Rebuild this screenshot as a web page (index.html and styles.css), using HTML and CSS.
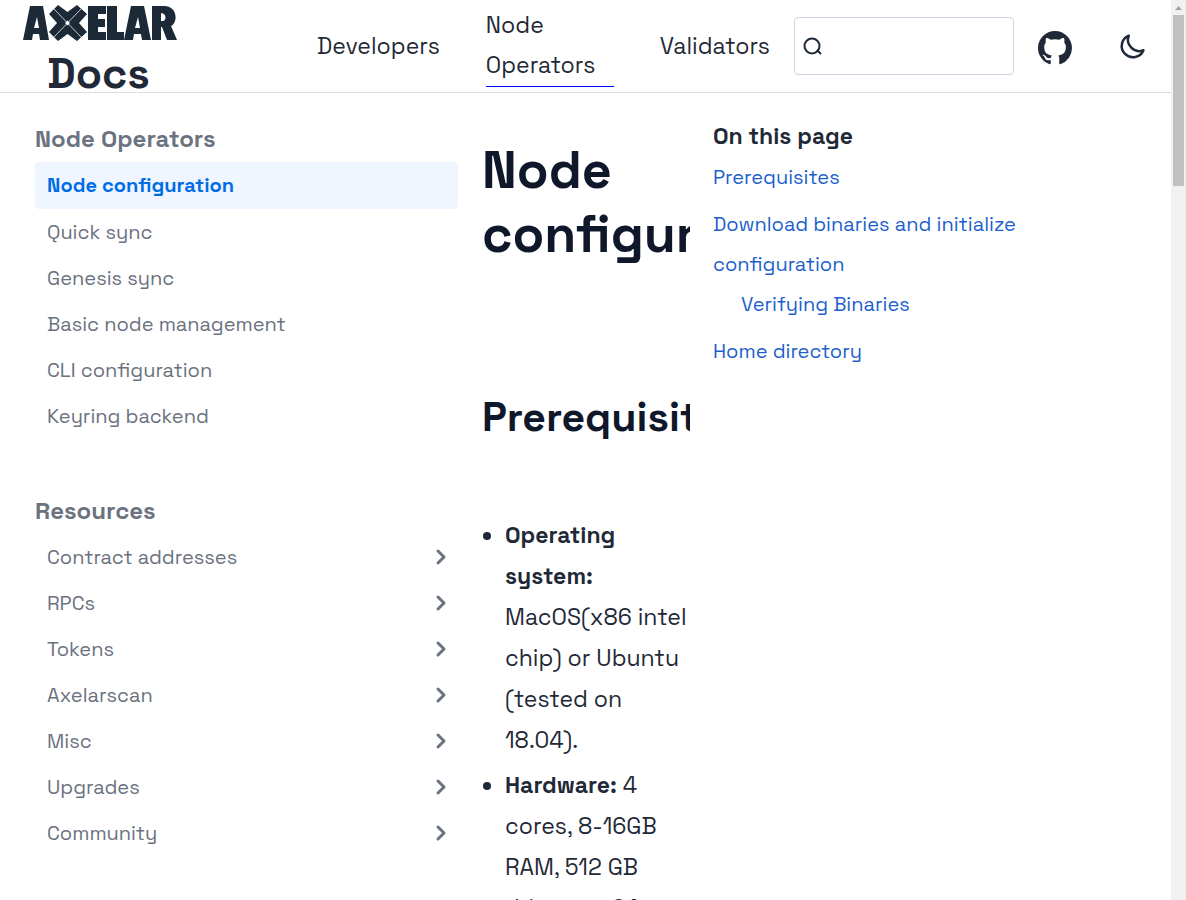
FILE: index.html
```html
<!DOCTYPE html>
<html lang="en">
<head>
<meta charset="utf-8">
<title>Node configuration | Axelar Docs</title>
<link rel="stylesheet" href="styles.css">
</head>
<body>
<div class="page">
  <header class="topbar">
    <a class="brand" href="#">
      <svg class="brand-logo" viewBox="0 0 154 36" role="img" aria-label="Axelar">
        <g fill="#1c2a38">
          <path fill-rule="evenodd" d="M0 35 7 1h13l6 34h-9l-1-6H10l-1 6zM11 23h5l-2-11z"/>
          <path d="M26 9 35 0l9.500 7L54 0l10 9-8 9 8 9-10 9-9.500-7L35 36l-9-9 8-9z"/>
          <path d="M65 1h18v8h-8v5h7v8h-7v5h8v8H65zM84 1h10v26h7v8H84z"/>
          <path fill-rule="evenodd" d="M101 35 108 1h13l7 34h-9l-1-6h-7l-1 6zM112 23h5l-2-11z"/>
          <path fill-rule="evenodd" d="M129 1h12c14 0 14 17 7 20l6 14h-10l-5-13h-1v13h-9zM138 8v8c6 1 6-8 0-8z"/>
        </g>
        <path d="M31 4 58 32M58 4 31 32" stroke="#fff" stroke-opacity=".75" fill="none"/>
        <path d="M44.500 15.500 47 18l-2.500 2.500L42 18z" fill="#fff"/>
      </svg>
      <span class="brand-name">Docs</span>
    </a>
    <nav class="main-nav" aria-label="Main">
      <a class="nav-link" href="#">Developers</a>
      <a class="nav-link nav-link-active" href="#">Node Operators</a>
      <a class="nav-link" href="#">Validators</a>
    </nav>
    <label class="search">
      <svg class="search-icon" viewBox="0 0 20 20" aria-hidden="true"><circle cx="9" cy="10" r="7.500"/><path d="M14 14l4 4"/></svg>
      <input class="search-input" type="search" aria-label="Search">
    </label>
    <a class="icon-link" href="#" aria-label="GitHub">
      <svg class="github-icon" viewBox="0 0 16 16"><path fill="currentColor" d="M8 0C3.580 0 0 3.580 0 8c0 3.540 2.290 6.530 5.470 7.590.4.070.55-.17.55-.38 0-.19-.01-.82-.01-1.490-2.010.37-2.530-.49-2.690-.94-.09-.23-.48-.94-.82-1.130-.28-.15-.68-.52-.01-.53.63-.01 1.080.58 1.230.82.72 1.210 1.870.87 2.330.66.07-.52.28-.87.51-1.070-1.780-.2-3.640-.89-3.640-3.950 0-.87.31-1.590.82-2.150-.08-.2-.36-1.020.08-2.120 0 0 .67-.21 2.200.82.64-.18 1.320-.27 2-.27s1.360.09 2 .27c1.530-1.040 2.200-.82 2.200-.82.44 1.100.16 1.920.08 2.120.51.56.82 1.270.82 2.150 0 3.070-1.870 3.750-3.650 3.950.29.25.54.73.54 1.480 0 1.070-.01 1.930-.01 2.200 0 .21.15.46.55.38A8.010 8.010 0 0 0 16 8c0-4.420-3.580-8-8-8z"/></svg>
    </a>
    <button class="theme-button" type="button" aria-label="Dark mode">
      <svg class="moon-icon" viewBox="0 0 24 24"><path fill="none" stroke="currentColor" stroke-width="2" stroke-linejoin="round" stroke-linecap="round" d="M20.354 15.354A9 9 0 0 1 8.646 3.646 9 9 0 1 0 20.354 15.354z"/></svg>
    </button>
  </header>
  <div class="columns">
    <nav class="sidebar" aria-label="Sections">
      <h2 class="side-title">Node Operators</h2>
      <ul class="side-list">
        <li><a class="side-link side-link-active" href="#">Node configuration</a></li>
        <li><a class="side-link" href="#">Quick sync</a></li>
        <li><a class="side-link" href="#">Genesis sync</a></li>
        <li><a class="side-link" href="#">Basic node management</a></li>
        <li><a class="side-link" href="#">CLI configuration</a></li>
        <li><a class="side-link" href="#">Keyring backend</a></li>
      </ul>
      <h2 class="side-title">Resources</h2>
      <ul class="side-list">
        <li><a class="side-link" href="#">Contract addresses<svg class="chevron" viewBox="0 0 12 18"><path d="M3 3l6 6-6 6"/></svg></a></li>
        <li><a class="side-link" href="#">RPCs<svg class="chevron" viewBox="0 0 12 18"><path d="M3 3l6 6-6 6"/></svg></a></li>
        <li><a class="side-link" href="#">Tokens<svg class="chevron" viewBox="0 0 12 18"><path d="M3 3l6 6-6 6"/></svg></a></li>
        <li><a class="side-link" href="#">Axelarscan<svg class="chevron" viewBox="0 0 12 18"><path d="M3 3l6 6-6 6"/></svg></a></li>
        <li><a class="side-link" href="#">Misc<svg class="chevron" viewBox="0 0 12 18"><path d="M3 3l6 6-6 6"/></svg></a></li>
        <li><a class="side-link" href="#">Upgrades<svg class="chevron" viewBox="0 0 12 18"><path d="M3 3l6 6-6 6"/></svg></a></li>
        <li><a class="side-link" href="#">Community<svg class="chevron" viewBox="0 0 12 18"><path d="M3 3l6 6-6 6"/></svg></a></li>
      </ul>
    </nav>
    <main class="article">
      <h1 class="article-title">Node configuration</h1>
      <h2 class="article-heading">Prerequisites</h2>
      <ul class="article-list">
        <li><strong>Operating system:</strong> MacOS(x86 intel chip) or Ubuntu (tested on 18.04).</li>
        <li><strong>Hardware:</strong> 4 cores, 8-16GB RAM, 512 GB drives, or 24</li>
      </ul>
    </main>
    <nav class="toc" aria-label="On this page">
      <h2 class="toc-title">On this page</h2>
      <ul class="toc-list">
        <li><a class="toc-link" href="#">Prerequisites</a></li>
        <li><a class="toc-link" href="#">Download binaries and initialize configuration</a>
          <ul class="toc-sublist"><li><a class="toc-link" href="#">Verifying Binaries</a></li></ul>
        </li>
        <li><a class="toc-link" href="#">Home directory</a></li>
      </ul>
    </nav>
  </div>
</div>
<div class="scrollbar" aria-hidden="true">
  <svg class="scroll-arrow" viewBox="0 0 15 15"><path d="M4 10h7L7.500 6z" fill="#a3a3a3"/></svg>
  <div class="scroll-thumb"></div>
</div>
</body>
</html>
```
FILE: styles.css
```css
* { box-sizing: border-box; }
body {
  margin: 0;
  display: flex;
  height: 100vh;
  overflow: hidden;
  background: #fff;
  color: #1f2937;
  font-family: "Space Grotesk", Inter, "Liberation Sans", sans-serif;
  font-size: 23px;
  line-height: 41px;
}
a { color: inherit; text-decoration: none; }
ul { list-style: none; margin: 0; padding: 0; }
h1, h2 { margin: 0; }
.page { flex: 1; min-width: 0; }
.topbar {
  display: flex;
  align-items: center;
  height: 93px;
  padding: 0 23px;
  border-bottom: 1px solid #dedede;
}
.brand { display: flex; flex-direction: column; gap: 12px; flex: 1; align-self: flex-start; padding-top: 5px; }
.brand-logo { width: 154px; height: 36px; }
.brand-name { padding-left: 24px; font-size: 43px; font-weight: 600; line-height: 42px; }
.main-nav { display: flex; align-items: center; gap: 46px; margin-right: 24px; }
.nav-link { line-height: 40px; }
.nav-link-active { width: 128px; padding-bottom: 1px; border-bottom: 1px solid #00f; }
.search {
  display: flex;
  align-items: center;
  width: 220px;
  height: 58px;
  padding: 0 8px;
  border: 1px solid #d2d2e2;
  border-radius: 4px;
}
.search-icon { flex: none; width: 20px; height: 20px; fill: none; stroke: currentColor; stroke-width: 2; }
.search-input { flex: 1; min-width: 0; border: 0; outline: 0; background: none; font: inherit; }
.icon-link { display: flex; margin: 4px 46px 0 24px; }
.github-icon { width: 34px; height: 34px; }
.theme-button { display: flex; padding: 0; border: 0; background: none; color: inherit; }
.moon-icon { width: 30px; height: 30px; }
.columns { display: flex; padding-left: 35px; }
.sidebar { flex: none; width: 423px; padding-top: 22px; color: #6b7280; }
.side-title { font-size: 24px; font-weight: 600; line-height: 47px; }
.side-list { margin-bottom: 48px; font-size: 20px; }
.side-link { display: flex; align-items: center; justify-content: space-between; padding: 0 11px 0 12px; line-height: 46px; border-radius: 4px; }
.side-link-active { background: #eff6ff; color: #006ce6; font-weight: 600; line-height: 47px; }
.chevron { width: 12px; height: 18px; fill: none; stroke: currentColor; stroke-width: 3; stroke-linecap: round; stroke-linejoin: round; }
.article { flex: none; width: 208px; margin-left: 24px; padding-top: 45px; overflow: hidden; }
.article-title { color: #0f172a; font-size: 52px; font-weight: 600; line-height: 64px; }
.article-heading { margin-top: 125px; color: #0f172a; font-size: 41px; font-weight: 600; line-height: 52px; }
.article-list { margin-top: 72px; padding-left: 23px; list-style: disc; }
.article-list li + li { margin-top: 4px; }
.toc { flex: none; width: 330px; margin-left: 23px; padding-top: 22px; }
.toc-title { font-size: 23px; font-weight: 600; line-height: 42px; }
.toc-list { font-size: 20px; line-height: 40px; color: #1d5fcc; }
.toc-list > li + li { margin-top: 7px; }
.toc-sublist { padding-left: 28px; }
.toc-link { display: block; }
.scrollbar { flex: none; width: 15px; background: #f1f1f1; }
.scroll-arrow { display: block; width: 15px; height: 15px; }
.scroll-thumb { height: 171px; margin: 0 2px; background: #c1c1c1; }
```
